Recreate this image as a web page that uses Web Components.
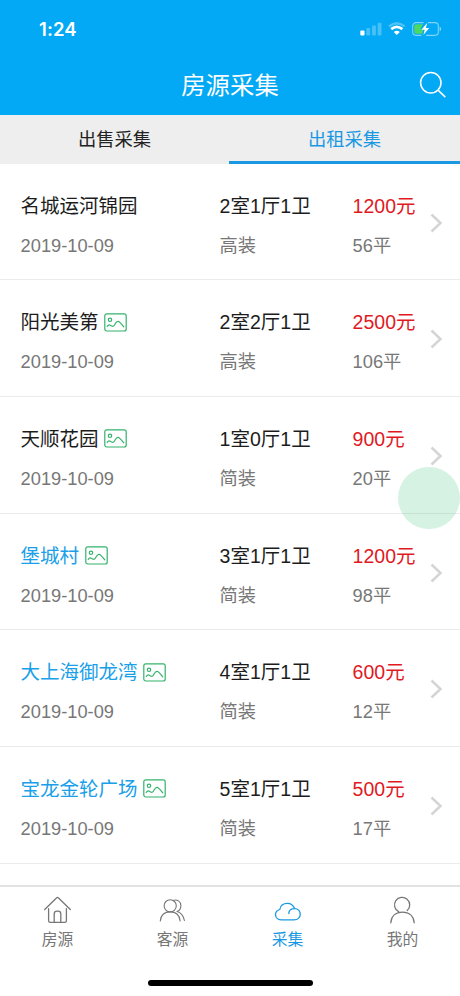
<!DOCTYPE html>
<html lang="zh-CN">
<head>
<meta charset="utf-8">
<title>房源采集</title>
<style>
html,body{margin:0;height:100%;background:#fff}
body{font-family:"Liberation Sans","Noto Sans CJK SC",sans-serif;overflow:hidden}
</style>
</head>
<body>
<house-app></house-app>
<script>
const define = (name, html) => customElements.define(name, class extends HTMLElement {
  connectedCallback() {
    if (this.shadowRoot) return;
    const t = document.createElement('template');
    t.innerHTML = typeof html === 'function' ? html(this) : html;
    this.attachShadow({mode: 'open'}).append(t.content.cloneNode(true));
  }
});

define('status-bar', `
<style>
:host{display:flex;justify-content:space-between;align-items:center;height:57px;box-sizing:border-box;padding:0 17px 0 39px;color:#fff}
.time{font:600 18.5px/22px Inter,sans-serif;letter-spacing:.1px}
svg{display:block}
</style>
<span class="time">1:24</span>
<svg width="84" height="16" viewBox="0 0 84 16">
 <rect x="1.3" y="9.5" width="4.2" height="5" rx="1" fill="#fff"/>
 <g fill="#fff" opacity=".27"><rect x="7.3" y="7" width="3.9" height="7.5" rx="1"/><rect x="13" y="4.5" width="3.9" height="10" rx="1"/><rect x="18.6" y="1.8" width="3.9" height="12.7" rx="1"/></g>
 <path d="M30 5.4Q37.8-1 45.6 5.4" fill="none" stroke="#fff" stroke-width="2.4" opacity=".3"/>
 <path d="M32.2 8.1Q37.8 3.7 43.4 8.1" fill="none" stroke="#fff" stroke-width="2.7"/>
 <path d="M34.8 11Q37.8 8.4 40.8 11L37.8 14Z" fill="#fff"/>
 <path d="M64.5 1.6H57a3.3 3.3 0 0 0-3.3 3.3v6.2a3.3 3.3 0 0 0 3.3 3.3h5.5M69 1.6h7a3.3 3.3 0 0 1 3.3 3.3v6.2a3.3 3.3 0 0 1-3.3 3.3h-9" fill="none" stroke="#fff" stroke-width="1.1" opacity=".5"/>
 <path d="M80.6 5.7q1.6.6 1.6 2.3t-1.6 2.3z" fill="#fff" opacity=".5"/>
 <path d="M57 3.3h7L61.3 8.6h3l-1 4.1H57a1.7 1.7 0 0 1-1.7-1.7V5A1.7 1.7 0 0 1 57 3.3Z" fill="#4bd964"/>
 <path d="M68.3 1.8 62.4 8.7h3.3l-1.3 5.3 5.8-7h-3.4Z" fill="#fff"/>
</svg>`);

define('title-bar', `
<style>
:host{display:grid;grid-template-columns:60px 1fr 60px;align-items:center;height:58px;color:#fff}
h1{margin:0;font-size:24.4px;line-height:36px;font-weight:400;text-align:center;padding:0}
svg{display:block;justify-self:end;margin-right:12px}
</style>
<span></span><h1><slot></slot></h1>
<svg width="30" height="30" viewBox="0 0 30 30" fill="none" stroke="#fff" stroke-width="1.5"><circle cx="12.8" cy="11.8" r="10.2"/><path d="m20 19.1 7.3 7"/></svg>`);

define('tab-item', `
<style>
:host{display:block;box-sizing:border-box;height:48.5px;font-size:18.3px;line-height:49px;text-align:center;color:#222}
:host([active]){color:#1a98e2;border-bottom:3px solid #1a98e2}
</style><slot></slot>`);

define('tab-bar', `
<style>:host{display:grid;grid-template-columns:229px 231px;background:#eee;height:48.5px}</style><slot></slot>`);

define('photo-badge', `
<style>:host{display:block;width:23px;height:19px}svg{display:block}</style>
<svg width="23" height="19" viewBox="0 0 23 19" fill="none" stroke="#34b26c" stroke-width="1.2" stroke-linecap="round" stroke-linejoin="round">
<rect x=".8" y=".8" width="21.4" height="17.2" rx="2"/><circle cx="6" cy="6.8" r="1.7"/><path d="M3.2 13.5q1.6-2.3 3-1.3t2.8 1.2q1 0 2.2-2.6 1.3-2.4 2.8-2.4t5.8 5.5"/></svg>`);

define('listing-row', el => `
<style>
:host{display:grid;grid-template-columns:199px 133px 1fr 13px;box-sizing:border-box;height:116.7px;padding:22px 17px 0 20.6px;border-bottom:1px solid #ebebeb;white-space:nowrap}
.main{display:flex;align-items:center;height:40px;font-size:19.5px;line-height:40px;color:#1c1c1c}
.sub{height:40px;font-size:18.25px;line-height:39px;color:#777}
.name{gap:5.5px}
:host([seen]) .name{color:#19a0e8}
.price{color:#e01a1f}
.arrow{margin-top:27px}
</style>
<div><div class="main name"><span>${el.getAttribute('name')}</span>${el.hasAttribute('photo') ? '<photo-badge></photo-badge>' : ''}</div><div class="sub">${el.getAttribute('date')}</div></div>
<div><div class="main">${el.getAttribute('rooms')}</div><div class="sub">${el.getAttribute('decor')}</div></div>
<div><div class="main price">${el.getAttribute('price')}</div><div class="sub">${el.getAttribute('area')}</div></div>
<svg class="arrow" width="13" height="20" viewBox="0 0 13 20" fill="none" stroke="#d5d5d5" stroke-width="2.5"><path d="m1.5 1.5 9 8.5-9 8.5"/></svg>`);

const icons = {
  home: '<path d="m1.7 14.5 12-11.8q.8-.7 1.6 0l12 11.8M5.6 13.7v12q0 1.6 1.6 1.6h14.6q1.6 0 1.6-1.6v-12M11.2 27v-8q0-2.8 2.8-2.8h1q2.8 0 2.8 2.8v8"/>',
  clients: '<circle cx="12.2" cy="10.8" r="6.1"/><path d="M2.3 26c.5-6 4.5-9.1 9.9-9.1s9.4 3.1 9.9 9.1M15 5.4c4.2-1.5 7.9 1 7.9 5.3 0 2.8-1.5 5-3.9 5.8 4.2 1.1 6.5 4.3 7.4 9"/>',
  cloud: '<path d="M8 24.8h13c4.2 0 6.2-2.8 6.2-5.6 0-3.3-2.4-5.6-5.5-5.6-3.5 0-5.9 2-5.9 5M21.6 13.6C20.3 10.3 17.6 8.4 14.5 8.4c-4.2 0-7.2 2.5-7.7 6.1-2.7.8-4.3 2.5-4.3 5 0 3.1 2.4 5.3 5.5 5.3"/>',
  user: '<path d="M10.6 16.7A7.6 7.6 0 1 1 19.2 15.6M2.8 27.8c.4-6.8 5-10.7 11.7-10.7s11.3 3.9 11.7 10.7"/>'
};
define('nav-item', el => `
<style>
:host{display:flex;flex:1;flex-direction:column;align-items:center;color:#777;font-size:15.8px;line-height:24px}
:host([active]){color:#1a98e2}
svg{display:block;margin-bottom:3px}
</style>
<svg width="29" height="30" viewBox="0 0 29 30" fill="none" stroke="currentColor" stroke-width="${el.getAttribute('icon') === 'clients' ? 1.1 : 1.3}" stroke-linecap="round" stroke-linejoin="round">${icons[el.getAttribute('icon')]}</svg>
<span><slot></slot></span>`);

define('bottom-nav', `
<style>
:host{display:flex;flex-direction:column;box-sizing:border-box;height:111.5px;border-top:2px solid #e2e2e2;background:#fff;padding-top:8px}
.items{display:flex;flex:1}
.home{align-self:center;width:165px;height:6px;border-radius:3px;background:#000;margin-bottom:10.5px}
</style>
<div class="items"><slot></slot></div><div class="home"></div>`);

define('house-app', `
<style>
:host{display:flex;flex-direction:column;width:460px;height:996px;overflow:hidden;position:relative}
header{background:#03a9f4;flex:none;height:115px}
main{flex:1;min-height:0;overflow:hidden}
tab-bar,bottom-nav{flex:none}
.float{position:absolute;left:398px;top:467px;width:62px;height:62px;border-radius:50%;background:rgba(50,190,115,.2)}
</style>
<header><status-bar></status-bar><title-bar>房源采集</title-bar></header>
<tab-bar><tab-item>出售采集</tab-item><tab-item active>出租采集</tab-item></tab-bar>
<main>
<listing-row name="名城运河锦园" date="2019-10-09" rooms="2室1厅1卫" decor="高装" price="1200元" area="56平"></listing-row>
<listing-row photo name="阳光美第" date="2019-10-09" rooms="2室2厅1卫" decor="高装" price="2500元" area="106平"></listing-row>
<listing-row photo name="天顺花园" date="2019-10-09" rooms="1室0厅1卫" decor="简装" price="900元" area="20平"></listing-row>
<listing-row photo seen name="堡城村" date="2019-10-09" rooms="3室1厅1卫" decor="简装" price="1200元" area="98平"></listing-row>
<listing-row photo seen name="大上海御龙湾" date="2019-10-09" rooms="4室1厅1卫" decor="简装" price="600元" area="12平"></listing-row>
<listing-row photo seen name="宝龙金轮广场" date="2019-10-09" rooms="5室1厅1卫" decor="简装" price="500元" area="17平"></listing-row>
</main>
<bottom-nav><nav-item icon="home">房源</nav-item><nav-item icon="clients">客源</nav-item><nav-item icon="cloud" active>采集</nav-item><nav-item icon="user">我的</nav-item></bottom-nav>
<div class="float"></div>`);
</script>
</body>
</html>
